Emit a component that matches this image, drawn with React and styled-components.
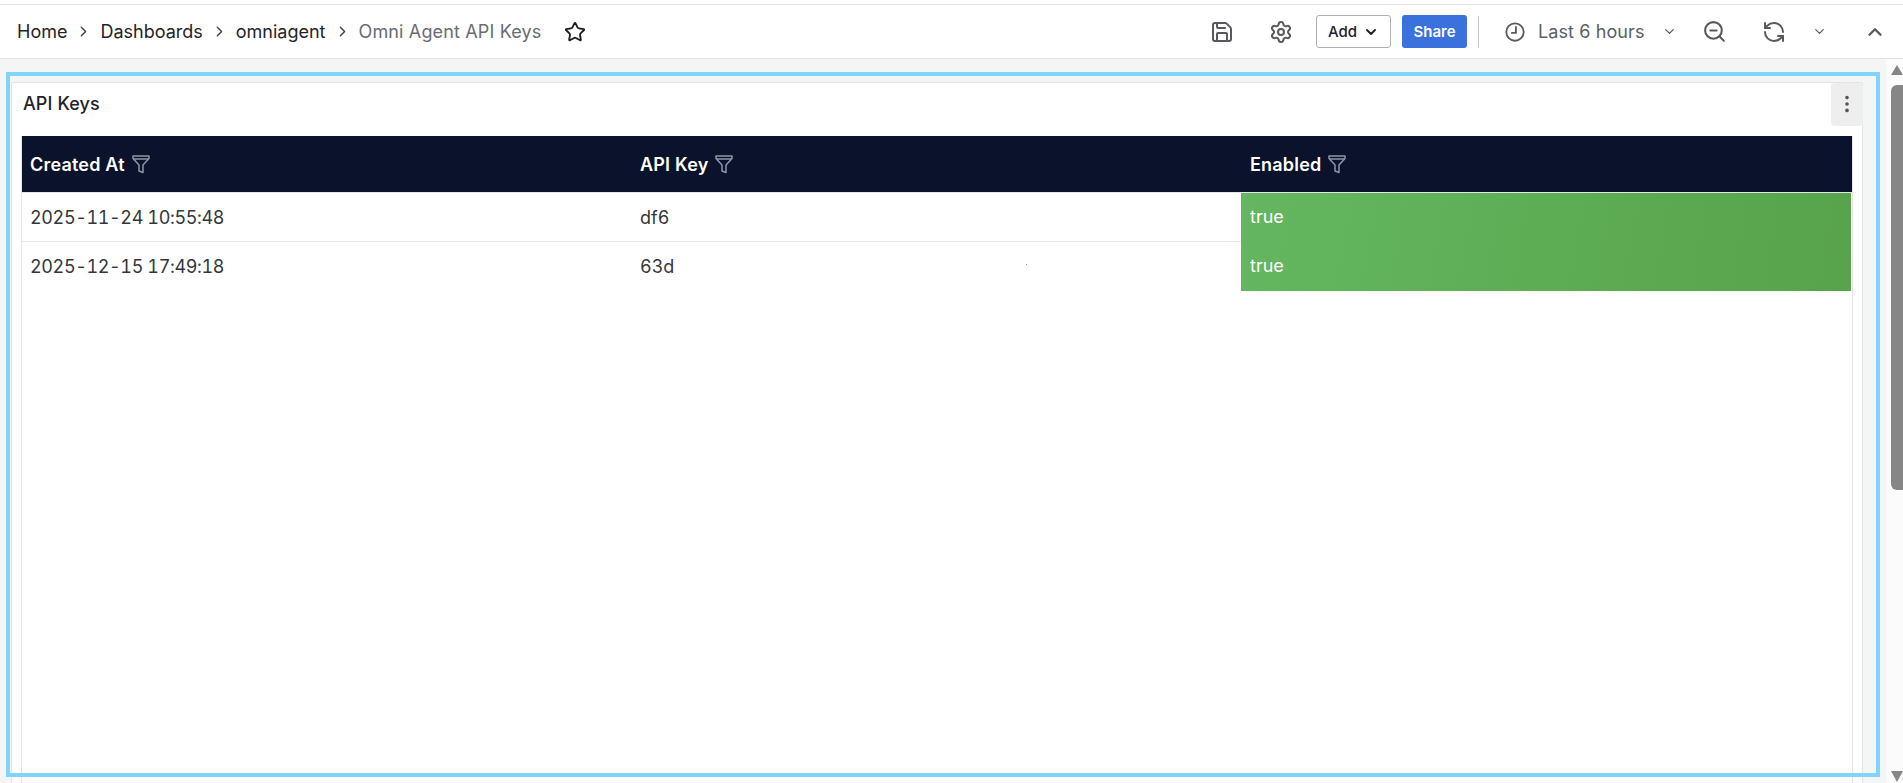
import React from "react";
import styled, { createGlobalStyle } from "styled-components";
import { Save, Settings, ZoomOut, RefreshCcw, ChevronDown, ChevronUp, ChevronRight, Star, MoreVertical } from "lucide-react";

const GlobalStyle = createGlobalStyle`
  html, body {
    margin: 0;
    height: 100%;
    overflow: hidden;
    background: #fff;
  }
  body {
    font-family: Inter, "Noto Sans", "Liberation Sans", sans-serif;
    color: #1f2328;
  }
`;

const Page = styled.div`
  height: 783px;
  display: flex;
  flex-direction: column;
`;

const Toolbar = styled.div`
  height: 53px;
  margin-top: 4px;
  border-top: 1px solid #e3e5e6;
  border-bottom: 1px solid #dfe1e2;
  display: flex;
  align-items: center;
  justify-content: space-between;
  padding: 0 17px;
  flex-shrink: 0;
`;

const Crumbs = styled.div`
  display: flex;
  align-items: center;
  font-size: 18px;
  letter-spacing: 0.05px;
`;

const Crumb = styled.span`
  color: ${(p) => (p.$current ? "#686c72" : "#1f2328")};
  letter-spacing: ${(p) => (p.$current ? "0.15px" : "0")};
  white-space: nowrap;
`;

const CrumbSep = styled.span`
  display: flex;
  width: 33px;
  justify-content: center;
  color: #444;
`;

const FavStar = styled.span`
  display: flex;
  margin-left: 23px;
  color: #1c1c1c;
`;

const Actions = styled.div`
  display: flex;
  align-items: center;
`;

const IconBtn = styled.span`
  display: flex;
  align-items: center;
  justify-content: center;
  width: ${(p) => p.$w || 22}px;
  margin-left: ${(p) => p.$ml || 0}px;
  color: #565a5f;

  svg {
    flex-shrink: 0;
  }
`;

const AddButton = styled.div`
  box-sizing: border-box;
  width: 75px;
  height: 33px;
  margin-left: 24px;
  border: 1px solid #aeb0b2;
  border-radius: 3px;
  display: flex;
  align-items: center;
  justify-content: center;
  gap: 6px;
  font-size: 15px;
  font-weight: 500;
  color: #202428;
`;

const ShareButton = styled.div`
  width: 65px;
  height: 33px;
  margin-left: 11px;
  border-radius: 3px;
  background: #3b71dc;
  color: #fff;
  font-size: 15px;
  font-weight: 600;
  display: flex;
  align-items: center;
  justify-content: center;
`;

const Divider = styled.div`
  width: 1px;
  height: 32px;
  margin-left: 11px;
  background: #c4c6c8;
`;

const RangeLabel = styled.span`
  margin-left: 12px;
  width: 107px;
  font-size: 18px;
  letter-spacing: 0.1px;
  color: #5a6069;
  white-space: nowrap;
`;

const Body = styled.div`
  flex: 1;
  min-height: 0;
  display: flex;
`;

const Main = styled.div`
  flex: 1;
  position: relative;
  overflow: hidden;
  background: #f4f5f5;
  padding: 23px 23px 0 11px;
`;

const Highlight = styled.div`
  position: absolute;
  left: 6px;
  top: 13px;
  width: 1874px;
  height: 705px;
  box-sizing: border-box;
  border: 4px solid #82d4fe;
  pointer-events: none;
`;

const Panel = styled.div`
  height: 760px;
  box-sizing: border-box;
  background: #fff;
  border: 1px solid #e2e4e5;
  border-radius: 2px;
`;

const PanelHead = styled.div`
  height: 53px;
  display: flex;
  justify-content: space-between;
  padding-left: 11px;
`;

const PanelTitle = styled.div`
  font-size: 18px;
  font-weight: 500;
  letter-spacing: 0.1px;
  line-height: 41px;
  color: #1f2328;
`;

const MenuBtn = styled.div`
  box-sizing: border-box;
  width: 32px;
  height: 43px;
  margin-right: -1px;
  padding-bottom: 2px;
  background: #eeeeef;
  border-radius: 4px;
  display: flex;
  align-items: center;
  justify-content: center;
  color: #555;
`;

const TableBox = styled.div`
  margin: 0 9px;
  height: 700px;
  border-left: 1px solid #e2e4e5;
  border-right: 1px solid #e2e4e5;
`;

const Grid = styled.div`
  display: grid;
  grid-template-columns: 610px 609px 1fr;
  position: relative;
`;

const HeadCell = styled.div`
  height: 56px;
  background: #0a132b;
  color: #fff;
  font-size: 18px;
  font-weight: 600;
  letter-spacing: 0.2px;
  padding-left: ${(p) => p.$pad || 8}px;
  display: flex;
  align-items: center;
  gap: 6px;
  border-bottom: 1px solid #e4e6e7;
`;

const Cell = styled.div`
  height: 49px;
  box-sizing: border-box;
  padding: 0 8px;
  display: flex;
  align-items: center;
  font-size: 18px;
  font-variant-numeric: tabular-nums;
  letter-spacing: ${(p) => (p.$date ? "-0.38px" : "0")};
  color: #33373b;
  border-bottom: ${(p) => (p.$last ? "none" : "1px solid #e4e6e7")};
`;

const StatusCell = styled.div`
  grid-column: 3;
  grid-row: 2 / span 2;
  margin-right: 1px;
  display: flex;
  flex-direction: column;
  background: linear-gradient(100deg, #64b760, #56a34a);
`;

const StatusText = styled.div`
  box-sizing: border-box;
  height: 49px;
  padding: 0 0 2px 9px;
  display: flex;
  align-items: center;
  color: #fff;
  font-size: 18px;
`;

const Speck = styled.div`
  position: absolute;
  left: 1004px;
  top: 128px;
  width: 1px;
  height: 1px;
  background: #9a9a9a;
`;

const Scrollbar = styled.div`
  width: 17px;
  background: #fbfbfb;
  display: flex;
  flex-direction: column;
  align-items: flex-end;
  flex-shrink: 0;
`;

const ArrowUp = styled.div`
  margin: 6px 0 10px;
  width: 0;
  height: 0;
  border-left: 6.5px solid transparent;
  border-right: 6.5px solid transparent;
  border-bottom: 10px solid #868686;
`;

const Thumb = styled.div`
  width: 12px;
  height: 405px;
  background: #868686;
  border-radius: 6px 0 0 6px;
`;

const ArrowDown = styled.div`
  margin-top: auto;
  margin-bottom: 1px;
  width: 0;
  height: 0;
  border-left: 6.5px solid transparent;
  border-right: 6.5px solid transparent;
  border-top: 11px solid #868686;
`;

function ClockIcon() {
  return (
    <svg width="22" height="22" viewBox="0 0 24 24" fill="none" stroke="currentColor" strokeWidth="2" strokeLinecap="round" strokeLinejoin="round">
      <circle cx="12" cy="12" r="9.5" />
      <path d="M13 6.5v6.5H8.5" />
    </svg>
  );
}

function FunnelIcon() {
  return (
    <svg width="20" height="20" viewBox="0 0 20 20" fill="none" stroke="#8e96a6" strokeWidth="1.5" strokeLinejoin="round">
      <path d="M2 2h16v2.5L12 11v7.5l-4-1.5V11L2 4.5z" />
      <path d="M2.6 5h14.8" />
    </svg>
  );
}

const rows = [
  { created: "2025-11-24 10:55:48", apiKey: "df6" },
  { created: "2025-12-15 17:49:18", apiKey: "63d" },
];

export default function App() {
  return (
    <Page>
      <GlobalStyle />
      <Toolbar>
        <Crumbs>
          <Crumb>Home</Crumb>
          <CrumbSep><ChevronRight size={17} /></CrumbSep>
          <Crumb>Dashboards</Crumb>
          <CrumbSep><ChevronRight size={17} /></CrumbSep>
          <Crumb>omniagent</Crumb>
          <CrumbSep><ChevronRight size={17} /></CrumbSep>
          <Crumb $current>Omni Agent API Keys</Crumb>
          <FavStar><Star size={22} strokeWidth={2} /></FavStar>
        </Crumbs>
        <Actions>
          <IconBtn><Save size={24} /></IconBtn>
          <IconBtn $ml={37}><Settings size={24} /></IconBtn>
          <AddButton>Add <ChevronDown size={16} strokeWidth={3} /></AddButton>
          <ShareButton>Share</ShareButton>
          <Divider />
          <IconBtn $ml={25}><ClockIcon /></IconBtn>
          <RangeLabel>Last 6 hours</RangeLabel>
          <IconBtn $ml={16} $w={16}><ChevronDown size={15} /></IconBtn>
          <IconBtn $ml={26} $w={23}><ZoomOut size={25} /></IconBtn>
          <IconBtn $ml={37}><RefreshCcw size={24} /></IconBtn>
          <IconBtn $ml={26} $w={16}><ChevronDown size={15} /></IconBtn>
          <IconBtn $ml={37}><ChevronUp size={22} strokeWidth={2.6} /></IconBtn>
        </Actions>
      </Toolbar>
      <Body>
        <Main>
          <Panel>
            <PanelHead>
              <PanelTitle>API Keys</PanelTitle>
              <MenuBtn><MoreVertical size={22} /></MenuBtn>
            </PanelHead>
            <TableBox>
              <Grid>
                <HeadCell>Created At <FunnelIcon /></HeadCell>
                <HeadCell>API Key <FunnelIcon /></HeadCell>
                <HeadCell $pad={9}>Enabled <FunnelIcon /></HeadCell>
                {rows.map((row, i) => (
                  <React.Fragment key={row.apiKey}>
                    <Cell $date $last={i === rows.length - 1}>{row.created}</Cell>
                    <Cell $last={i === rows.length - 1}>{row.apiKey}</Cell>
                  </React.Fragment>
                ))}
                <StatusCell>
                  <StatusText>true</StatusText>
                  <StatusText>true</StatusText>
                </StatusCell>
                <Speck />
              </Grid>
            </TableBox>
          </Panel>
          <Highlight />
        </Main>
        <Scrollbar>
          <ArrowUp />
          <Thumb />
          <ArrowDown />
        </Scrollbar>
      </Body>
    </Page>
  );
}
